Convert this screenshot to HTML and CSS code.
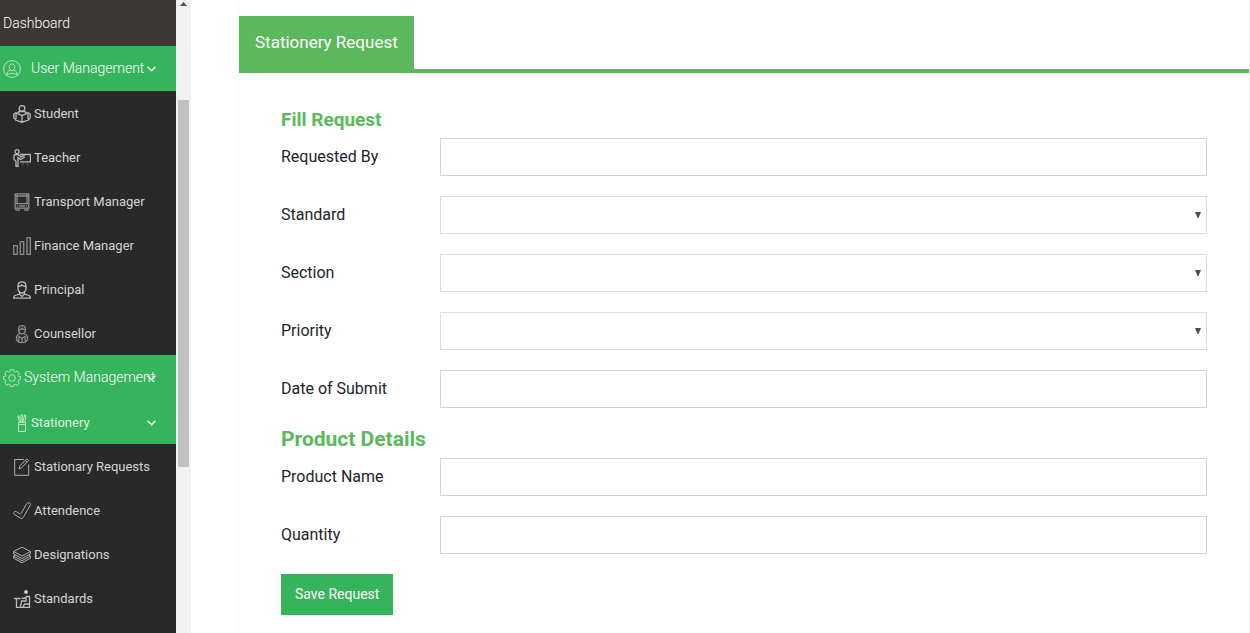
FILE: index.html
```html
<!DOCTYPE html>
<html lang="en">
<head>
<meta charset="utf-8">
<title>Stationery Request</title>
<link rel="stylesheet" href="styles.css">
</head>
<body>
<div class="layout">
  <nav class="sidebar">
    <a class="item top" href="#">Dashboard</a>
    <a class="item group" href="#">
      <svg class="icon" viewBox="0 0 18 18"><circle cx="9" cy="9" r="8.4"/><path d="M6.200 7c0-2 1-3 2.800-3s2.800 1 2.800 3-1 3.500-2.800 3.500S6.200 9 6.200 7zM3.800 14.800c0-2.500 1-3.500 3.500-4.500M14.200 14.800c0-2.500-1-3.500-3.500-4.500M4 14.500c3-1.300 7-1.300 10 0"/></svg>
      <span class="wide">User Management</span>
      <svg class="chevron" viewBox="0 0 9 6"><path d="M.5.8l4 4 4-4"/></svg>
    </a>
    <a class="item sub" href="#">
      <svg class="icon bold" viewBox="0 0 18 18"><circle cx="9" cy="3.500" r="2.800"/><path d="M4.500 8.500C5 7 6 6.500 7 6.500h4c1 0 2 .5 2.500 2M.8 9l2-1.200L9 10.500l6.200-2.700 2 1.200v3.500l-1.700 2.500L9 17.200 2.500 15 .8 12.500zM9 10.500v6.700M3 9v5M15 9v5"/></svg>
      <span>Student</span>
    </a>
    <a class="item sub" href="#">
      <svg class="icon bold" viewBox="0 0 18 18"><circle cx="4" cy="2.700" r="2"/><path d="M1 11V7.500C1 6 2 5.500 3 5.500h2L8 8l3.500-1.500M1.500 11L3 12v5.300h2V8.500l2.500 2 4.500-2.500M7 5.500h10.500v7.300H7"/><path class="dim" d="M10.500 14l-1.500 2.500M14 14l1.500 2.500"/></svg>
      <span>Teacher</span>
    </a>
    <a class="item sub" href="#">
      <svg class="icon wash" viewBox="0 0 18 18"><path d="M2.200.9h13.600v14.300H2.200zM2.500 3h13M2.500 10.700h13M4 1v10M14 1v10M6 13h6M3 15.200v2h3v-2M12 15.200v2h3v-2M4 13h1M13 13h1"/></svg>
      <span>Transport Manager</span>
    </a>
    <a class="item sub" href="#">
      <svg class="icon wash" viewBox="0 0 18 18"><path d="M.7 8.700h3.600v8.600H.7zM7.300 4.700h3.400v12.600H7.300zM14 .7h3.300v16.600H14z"/></svg>
      <span>Finance Manager</span>
    </a>
    <a class="item sub" href="#">
      <svg class="icon bold" viewBox="0 0 18 18"><path d="M5 5c0-3 1.500-4.200 4-4.200S13 2 13 5v2.500c0 2.500-2 4.500-4 4.500S5 10 5 7.500zM5 5.500C7 5.500 8 4.800 8.700 3.800 9.700 5 11 5.500 13 5.500M6.500 11v2L2 14.500C1 15 .6 16 .6 17.200h16.800c0-1.200-.4-2.200-1.400-2.700L11.500 13v-2M6.500 13.300L9 15.500l2.500-2.200"/></svg>
      <span>Principal</span>
    </a>
    <a class="item sub" href="#">
      <svg class="icon wash" viewBox="0 0 18 18"><path d="M5.500 4.500C5.500 2 7 .6 9 .6s3.500 1.400 3.500 3.900c0 2.500-1.500 4.300-3.500 4.300s-3.500-1.800-3.500-4.300zM5.500 4.800c2 0 3-.5 3.500-1.500.5 1 1.500 1.500 3.500 1.500M6.500 9c-2 .8-3 2-3 4v2L6 17.300h6l2.500-2.300v-2c0-2-1-3.200-3-4M9 13v4M5.500 11L9 13.500l3.500-2.500M5.800 12v4M12.200 12v4"/></svg>
      <span>Counsellor</span>
    </a>
    <a class="item group" href="#">
      <svg class="icon" viewBox="0 0 18 18"><circle cx="9" cy="9" r="3.300"/><path d="M7.300.7h3.400l.5 2.200 1 .4 2-1.200 2.200 2.300-1.100 1.900.4 1 2 .5v2.700l-2 .7-.5 1.200 1.100 1.800-2.200 2.200-1.900-1.100-1.100.4-.5 1.700H7.300l-.5-1.900-1-.5-1.900 1.200-2.300-2.200 1.200-1.900-.4-1.100-1.800-.6V7.700l1.900-.5.4-1.200-1.200-1.800 2.200-2.200 2 1.200 1-.4z"/></svg>
      <span>System Management</span>
      <svg class="chevron" viewBox="0 0 9 6"><path d="M.5.8l4 4 4-4"/></svg>
    </a>
    <a class="item sub open" href="#">
      <svg class="icon" viewBox="0 0 18 18"><path d="M5.500 8.500h7v9h-7zM6.500 8.500L4.800 2l1-.5L8 8M8 8V1l1.200-.4L9.500 8M10 8l1.500-7 1.500.5L11.800 8M5.500 10.500h7"/></svg>
      <span>Stationery</span>
      <svg class="chevron" viewBox="0 0 9 6"><path d="M.5.8l4 4 4-4"/></svg>
    </a>
    <a class="item sub" href="#">
      <svg class="icon" viewBox="0 0 18 18"><path d="M11 1.500H1.700v15.800h14V6.500M13.800.8l1.800 1.700-7 7.300-2.600 1 .8-2.800zM12.300 2.300L14 4"/></svg>
      <span>Stationary Requests</span>
    </a>
    <a class="item sub" href="#">
      <svg class="icon" viewBox="0 0 18 18"><path d="M.8 10.500c1-1.300 2-1.200 3-.6l3 1.800c.6.300 1 .2 1.400-.4L13.500 2c.8-1.300 1.800-1.500 3-1.200 1 .4 1.200 1.400.6 2.700l-6.500 11.300c-.8 1.600-2 2-3.500 1.200L1.500 12.500C.7 12 .4 11.300.8 10.500z"/></svg>
      <span>Attendence</span>
    </a>
    <a class="item sub" href="#">
      <svg class="icon" viewBox="0 0 18 18"><path d="M9 1.200l8.400 4.300L9 10 .6 5.500zM.6 5.500V8L9 12.500 17.400 8V5.500M2.500 9L.6 10.200 9 14.700l8.400-4.500L15.500 9M.6 10.200v2L9 16.800l8.400-4.600v-2"/></svg>
      <span>Designations</span>
    </a>
    <a class="item sub" href="#">
      <svg class="icon bold" viewBox="0 0 18 18"><circle class="solid" cx="13" cy="2" r="1.300"/><path d="M1 8.500h6.500M3.500 9v8.300h13V6.500h-2.700L11 8.500 8.500 8M13 6.500v4.500H8.500L7.500 17M16.500 14h-5L10 17"/></svg>
      <span>Standards</span>
    </a>
  </nav>
  <div class="scrollbar">
    <svg class="scroll-up" viewBox="0 0 7 4"><path d="M0 4L3.500 0 7 4z"/></svg>
    <div class="thumb"></div>
  </div>
  <main class="content">
    <section class="card">
      <header class="tabs"><h1 class="tab">Stationery Request</h1></header>
      <form class="form">
        <h2 class="heading">Fill Request</h2>
        <div class="row"><label for="by">Requested By</label><input class="control" id="by" type="text"></div>
        <div class="row"><label for="standard">Standard</label>
          <div class="select"><select class="control" id="standard"><option></option></select><svg class="arrow" viewBox="0 0 6 6"><path d="M0 0h6L3.500 6h-1z"/></svg></div></div>
        <div class="row"><label for="section">Section</label>
          <div class="select"><select class="control" id="section"><option></option></select><svg class="arrow" viewBox="0 0 6 6"><path d="M0 0h6L3.500 6h-1z"/></svg></div></div>
        <div class="row"><label for="priority">Priority</label>
          <div class="select"><select class="control" id="priority"><option></option></select><svg class="arrow" viewBox="0 0 6 6"><path d="M0 0h6L3.500 6h-1z"/></svg></div></div>
        <div class="row"><label for="date">Date of Submit</label><input class="control" id="date" type="text"></div>
        <h2 class="heading large">Product Details</h2>
        <div class="row"><label for="product">Product Name</label><input class="control" id="product" type="text"></div>
        <div class="row"><label for="quantity">Quantity</label><input class="control" id="quantity" type="text"></div>
        <button class="save" type="button">Save Request</button>
      </form>
    </section>
  </main>
</div>
</body>
</html>
```
FILE: styles.css
```css
* { box-sizing: border-box; }

body {
  margin: 0;
  font: 16px/24px Roboto, sans-serif;
  color: #212529;
  background: #fff;
}

.layout { display: flex; min-height: 100vh; }

.sidebar {
  width: 176px;
  flex: none;
  background: #292929;
}

.item {
  position: relative;
  display: flex;
  align-items: center;
  gap: 3px;
  height: 45px;
  padding-left: 3px;
  font-size: 14px;
  font-weight: 300;
  line-height: 20px;
  white-space: nowrap;
  color: #fff;
  text-decoration: none;
}
.top { height: 46px; background: #3a3735; }
.group { padding-bottom: 1px; background: #35b45b; }
.wide { padding-left: 7px; }
.sub {
  height: 44px;
  padding-top: 2px;
  padding-left: 13px;
  font-size: 13px;
  font-weight: 400;
  color: #d4d4d4;
}
.open { gap: 0; color: #dff5e6; background: #35b45b; }

.icon {
  width: 18px;
  height: 18px;
  flex: none;
  fill: none;
  stroke: #b0b0b0;
  stroke-width: 1;
}
.group .icon { margin-top: 2px; }
.bold { stroke: #bbb; stroke-width: 1.3; }
.wash { stroke: #8c8c8c; stroke-width: 1.3; }
.dim { stroke: #555; }
.solid { fill: #fff; }
.group .icon, .open .icon { stroke: #b5e6c3; }

.chevron {
  position: absolute;
  right: 20px;
  top: 20px;
  width: 9px;
  height: 6px;
  fill: none;
  stroke: #fff;
  stroke-width: 1.3;
}

.scrollbar {
  width: 15px;
  flex: none;
  display: flex;
  flex-direction: column;
  align-items: center;
  padding-top: 2px;
  background: #f1f1f1;
}
.scroll-up { width: 7px; height: 4px; fill: #505050; }
.thumb {
  width: 11px;
  height: 58vh;
  margin-top: 94px;
  background: #c1c1c1;
}

.content { flex: 1; min-width: 0; padding-left: 47px; display: flex; }
.card {
  flex: 1;
  min-width: 0;
  padding-top: 16px;
  border: solid #ececec;
  border-width: 0 1px;
  border-left-color: #f9f9f9;
}
.tabs { display: flex; border-bottom: 4px solid #5cb85c; }
.tab {
  margin: 0;
  padding: 14px 16px 15px;
  font-size: 17px;
  font-weight: 400;
  line-height: 24px;
  color: #fff;
  background: #5cb85c;
}

.form { padding: 35px 42px 18px; }
.heading {
  margin: 0 0 6px;
  font-size: 19px;
  font-weight: 700;
  line-height: 24px;
  color: #5cb85c;
}
.large { margin-bottom: 8px; font-size: 21px; line-height: 22px; }
.row {
  display: grid;
  grid-template-columns: 159px 1fr;
  align-items: center;
  margin-bottom: 20px;
}
.control {
  display: block;
  width: 100%;
  height: 38px;
  padding: 6px 12px;
  font: inherit;
  color: #495057;
  background: #fff;
  border: 1px solid #ced4da;
  border-radius: 0;
  appearance: none;
}
.select { position: relative; }
.select .control { border-color: #ddd; }
.arrow {
  position: absolute;
  right: 6px;
  top: 16px;
  width: 6px;
  height: 6px;
  fill: #495057;
  pointer-events: none;
}
.save {
  height: 41px;
  padding: 0 14px 2px;
  font: 400 14px/20px Roboto, sans-serif;
  color: #fff;
  background: #35b45b;
  border: 0;
}
```
